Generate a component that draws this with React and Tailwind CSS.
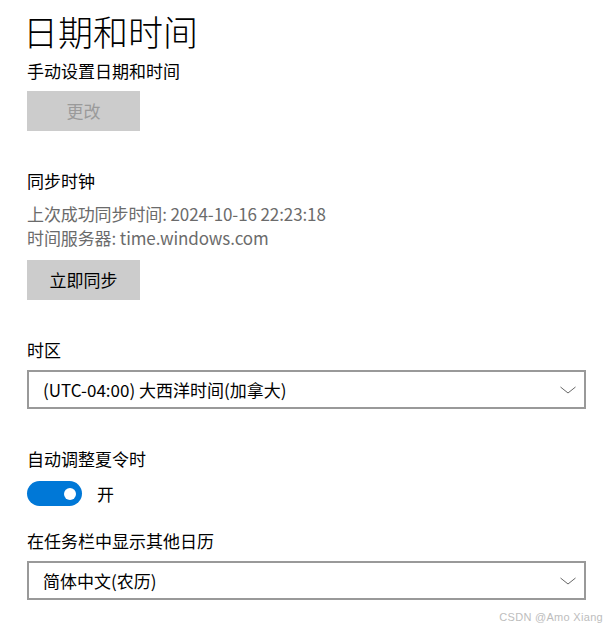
import React, { useState } from 'react';

function Chevron() {
  return (
    <svg width="16" height="8" viewBox="0 0 16 8" className="shrink-0">
      <path d="M0.5 1 L8 7 L15.5 1" fill="none" stroke="#666666" strokeWidth="1" />
    </svg>
  );
}

function Dropdown({ value }) {
  return (
    <div className="w-[559px] h-[39px] border-2 border-[#999999] bg-white flex items-center justify-between pl-[14px] pr-[8px]">
      <span className="text-[17px] leading-[24px] text-black">{value}</span>
      <Chevron />
    </div>
  );
}

function Toggle({ on, onChange }) {
  return (
    <button
      onClick={() => onChange(!on)}
      className={`w-[55px] h-[25px] rounded-full flex items-center px-[6px] ${on ? 'bg-[#0078d7] justify-end' : 'bg-white border-2 border-black justify-start'}`}
    >
      <span className={`w-[12px] h-[12px] rounded-full ${on ? 'bg-white' : 'bg-black'}`} />
    </button>
  );
}

export default function App() {
  const [dst, setDst] = useState(true);

  return (
    <div className="w-[609px] h-[628px] bg-white relative overflow-hidden font-['Noto_Sans_CJK_SC','Noto_Sans',sans-serif] text-black">
      <div className="flex flex-col pl-[27px] pt-[11px]">
        <h1 className="text-[35px] leading-[40px] font-light -ml-[4px]">日期和时间</h1>

        <div className="text-[17px] leading-[24px] mt-[8px]">手动设置日期和时间</div>
        <button className="w-[113px] h-[40px] bg-[#cccccc] text-[#9a9a9a] text-[17px] mt-[8px] flex items-center justify-center">
          更改
        </button>

        <div className="text-[17px] leading-[24px] mt-[38px]">同步时钟</div>
        <div className="text-[17px] leading-[24px] mt-[9px] text-[#6b6b6b] tracking-[-0.1px]">
          <div>上次成功同步时间: 2024-10-16 22:23:18</div>
          <div>时间服务器: time.windows.com</div>
        </div>
        <button className="w-[113px] h-[40px] bg-[#cccccc] text-black text-[17px] mt-[10px] flex items-center justify-center">
          立即同步
        </button>

        <div className="text-[17px] leading-[24px] mt-[38px]">时区</div>
        <div className="mt-[8px]">
          <Dropdown value="(UTC-04:00) 大西洋时间(加拿大)" />
        </div>

        <div className="text-[17px] leading-[24px] mt-[38px]">自动调整夏令时</div>
        <div className="flex items-center gap-[15px] mt-[10px]">
          <Toggle on={dst} onChange={setDst} />
          <span className="text-[17px] leading-[24px]">{dst ? '开' : '关'}</span>
        </div>

        <div className="text-[17px] leading-[24px] mt-[23px]">在任务栏中显示其他日历</div>
        <div className="mt-[8px]">
          <Dropdown value="简体中文(农历)" />
        </div>
      </div>

      <div className="absolute right-[6px] bottom-[4px] text-[11px] leading-[14px] text-[#bdbdbd] font-['Liberation_Sans',sans-serif] tracking-[0.3px]">
        CSDN @Amo Xiang
      </div>
    </div>
  );
}
